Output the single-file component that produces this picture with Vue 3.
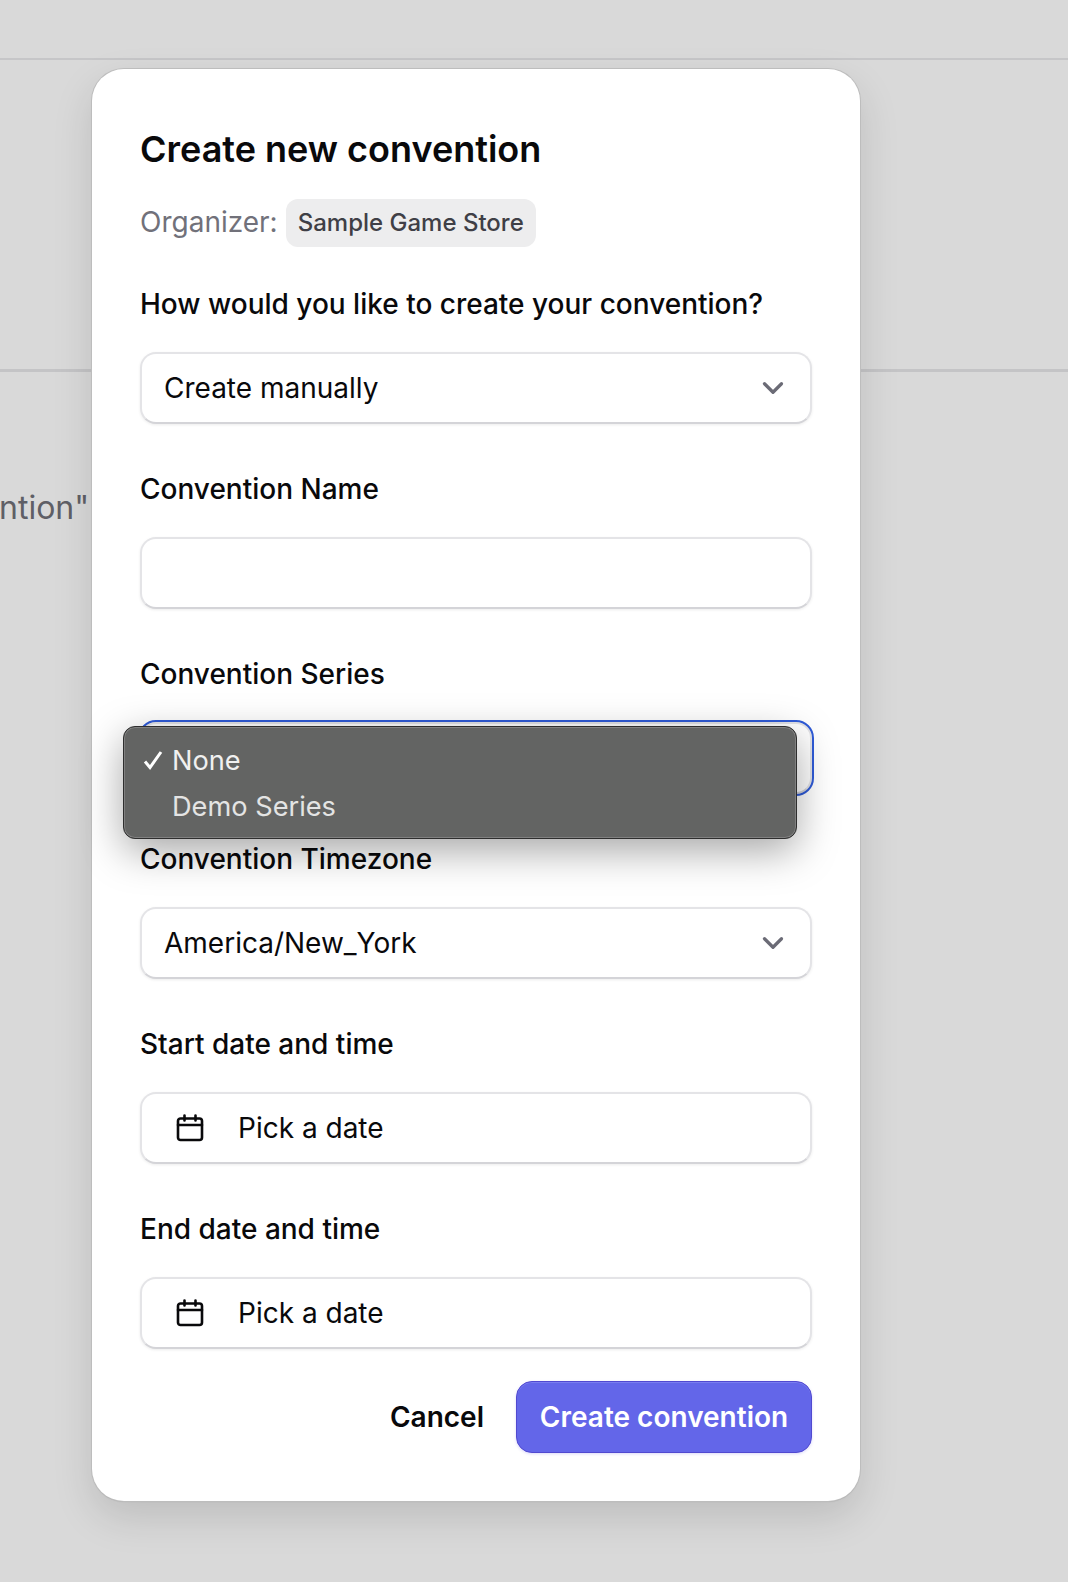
<script setup>
const series = ['Demo Series']
</script>

<template>
  <div class="page">
    <div class="bg-header"></div>
    <div class="bg-section"></div>
    <div class="bg-empty">ntion"</div>

    <div class="modal">
      <h2 class="title">Create new convention</h2>
      <div class="organizer">
        <span class="org-label">Organizer:</span>
        <span class="org-badge">Sample Game Store</span>
      </div>

      <div class="form">
        <div class="field">
          <div class="label">How would you like to create your convention?</div>
          <div class="control">
            <span>Create manually</span>
            <svg class="chev" viewBox="0 0 24 24" fill="none"><path d="M6 9l6 6 6-6" stroke="currentColor" stroke-width="2.3" stroke-linecap="round" stroke-linejoin="round"/></svg>
          </div>
        </div>

        <div class="field">
          <div class="label">Convention Name</div>
          <div class="control"></div>
        </div>

        <div class="field">
          <div class="label">Convention Series</div>
          <div class="control focused">
            <div class="popup">
              <div class="opt selected">
                <svg class="tick" viewBox="0 0 20 20" fill="none"><path d="M2 11.5l5 6L18 2" stroke="currentColor" stroke-width="3"/></svg>
                None
              </div>
              <div v-for="s in series" :key="s" class="opt">{{ s }}</div>
            </div>
          </div>
        </div>

        <div class="field">
          <div class="label">Convention Timezone</div>
          <div class="control">
            <span>America/New_York</span>
            <svg class="chev" viewBox="0 0 24 24" fill="none"><path d="M6 9l6 6 6-6" stroke="currentColor" stroke-width="2.3" stroke-linecap="round" stroke-linejoin="round"/></svg>
          </div>
        </div>

        <div class="field">
          <div class="label">Start date and time</div>
          <div class="control date">
            <svg class="cal" viewBox="0 0 28 28" fill="none" stroke="currentColor" stroke-width="2.6" stroke-linecap="round" stroke-linejoin="round"><rect x="2" y="4.5" width="24" height="21.5" rx="2.5"/><path d="M8.5 1.5v5M19.5 1.5v5M2 11h24"/></svg>
            <span>Pick a date</span>
          </div>
        </div>

        <div class="field">
          <div class="label">End date and time</div>
          <div class="control date">
            <svg class="cal" viewBox="0 0 28 28" fill="none" stroke="currentColor" stroke-width="2.6" stroke-linecap="round" stroke-linejoin="round"><rect x="2" y="4.5" width="24" height="21.5" rx="2.5"/><path d="M8.5 1.5v5M19.5 1.5v5M2 11h24"/></svg>
            <span>Pick a date</span>
          </div>
        </div>
      </div>

      <div class="actions">
        <button class="cancel">Cancel</button>
        <button class="submit">Create convention</button>
      </div>
    </div>
  </div>
</template>

<style>
html, body { margin: 0; background: #d9d9d9; }
</style>

<style scoped>
.page {
  position: relative;
  width: 1068px;
  height: 1582px;
  overflow: hidden;
  background: #d9d9d9;
  font-family: Inter, "Liberation Sans", sans-serif;
  color: #09090b;
}
.bg-header { height: 58px; border-bottom: 2px solid #c6c6c8; }
.bg-section { height: 309px; border-bottom: 3px solid #c4c4c6; }
.bg-empty {
  margin-top: 116px;
  margin-left: -1px;
  font-size: 32px;
  line-height: 40px;
  color: #5f5f66;
}
.modal {
  position: absolute;
  left: 92px;
  top: 69px;
  width: 768px;
  height: 1432px;
  box-sizing: border-box;
  padding: 48px;
  background: #fff;
  border-radius: 32px;
  box-shadow: 0 0 0 1px #bdbdbd, 0 1px 1px #a8a8a8, 0 16px 40px rgba(0, 0, 0, 0.13);
}
.title {
  margin: 12px 0 0;
  font-size: 36px;
  line-height: 40px;
  font-weight: 600;
}
.organizer {
  display: flex;
  align-items: flex-start;
  gap: 8px;
  margin-top: 30px;
}
.org-label { font-size: 28px; line-height: 46px; color: #71717a; }
.org-badge {
  height: 48px;
  padding: 0 12px 2px;
  box-sizing: border-box;
  display: flex;
  align-items: center;
  border-radius: 12px;
  background: #ededee;
  color: #3f3f46;
  font-size: 24px;
  font-weight: 500;
}
.form { display: flex; flex-direction: column; gap: 47px; margin-top: 39px; }
.field { display: flex; flex-direction: column; gap: 30px; }
.label { font-size: 28px; line-height: 36px; font-weight: 500; }
.control {
  position: relative;
  height: 72px;
  box-sizing: border-box;
  display: flex;
  align-items: center;
  justify-content: space-between;
  padding: 0 22px;
  background: #fff;
  border: 2px solid #e4e4e7;
  border-bottom-color: #d4d4d8;
  border-radius: 16px;
  font-size: 28px;
  box-shadow: 0 1px 3px rgba(0, 0, 0, 0.08);
}
.focused {
  outline: 2px solid #2f5bd8;
  outline-offset: 0;
}
.popup {
  position: absolute;
  left: -19px;
  top: 2px;
  width: 674px;
  height: 113px;
  box-sizing: border-box;
  padding: 11px 0;
  background: #636463;
  border: 1.5px solid #2e2e2e;
  border-radius: 12px;
  box-shadow: inset 0 0 0 1px #808080, 0 12px 40px rgba(0, 0, 0, 0.35);
  color: #e4e4e4;
  font-size: 27.2px;
  z-index: 2;
}
.opt { position: relative; height: 46px; line-height: 46px; padding-left: 48px; }
.tick { position: absolute; left: 19px; top: 12px; width: 20px; height: 20px; color: #fff; }
.selected { color: #f0f0f0; }
.chev { width: 34px; height: 34px; color: #6b6b76; margin-right: -2px; }
.date {
  justify-content: flex-start;
  gap: 34px;
  padding-left: 34px;
}
.cal { width: 28px; height: 28px; color: #09090b; flex: none; }
.actions {
  display: flex;
  justify-content: flex-end;
  align-items: center;
  gap: 32px;
  margin-top: 32px;
}
.cancel {
  border: 0;
  background: none;
  padding: 0;
  font: 600 28px Inter, "Liberation Sans", sans-serif;
  color: #09090b;
}
.submit {
  height: 72px;
  width: 296px;
  box-sizing: border-box;
  border: 1.5px solid #5149d0;
  border-radius: 16px;
  background: #6366e9;
  color: #fff;
  font: 600 28px Inter, "Liberation Sans", sans-serif;
  box-shadow: inset 0 1px 0 #7a7df0, 0 1px 3px rgba(79, 70, 229, 0.2);
}
</style>
